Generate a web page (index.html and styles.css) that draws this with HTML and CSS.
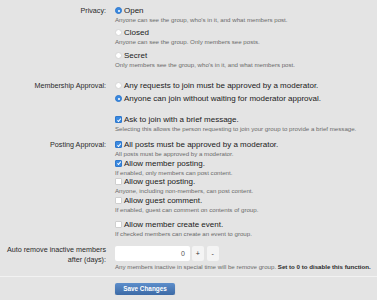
FILE: index.html
```html
<!DOCTYPE html>
<html>
<head>
<meta charset="utf-8">
<link rel="stylesheet" href="styles.css">
</head>
<body>
<div class="form">
  <div class="row">
    <div class="label">Privacy:</div>
    <div class="controls privacy">
      <div class="opt"><span class="radio on"></span>Open</div>
      <p class="desc">Anyone can see the group, who's in it, and what members post.</p>
      <div class="opt"><span class="radio"></span>Closed</div>
      <p class="desc">Anyone can see the group. Only members see posts.</p>
      <div class="opt"><span class="radio"></span>Secret</div>
      <p class="desc">Only members see the group, who's in it, and what members post.</p>
    </div>
  </div>

  <div class="row membership">
    <div class="label">Membership Approval:</div>
    <div class="controls">
      <div class="opt"><span class="radio"></span>Any requests to join must be approved by a moderator.</div>
      <div class="opt second"><span class="radio on"></span>Anyone can join without waiting for moderator approval.</div>
      <div class="opt spaced"><span class="check on"></span>Ask to join with a brief message.</div>
      <p class="desc">Selecting this allows the person requesting to join your group to provide a brief message.</p>
    </div>
  </div>

  <div class="row posting">
    <div class="label">Posting Approval:</div>
    <div class="controls">
      <div class="opt"><span class="check on"></span>All posts must be approved by a moderator.</div>
      <p class="desc">All posts must be approved by a moderator.</p>
      <div class="opt"><span class="check on"></span>Allow member posting.</div>
      <p class="desc">If enabled, only members can post content.</p>
      <div class="opt"><span class="check"></span>Allow guest posting.</div>
      <p class="desc">Anyone, including non-members, can post content.</p>
      <div class="opt"><span class="check"></span>Allow guest comment.</div>
      <p class="desc">If enabled, guest can comment on contents of group.</p>
      <div class="opt late"><span class="check"></span>Allow member create event.</div>
      <p class="desc">If checked members can create an event to group.</p>
    </div>
  </div>

  <div class="row auto">
    <div class="label two">Auto remove inactive members<br>after (days):</div>
    <div class="controls">
      <div class="spinner">
        <div class="num">0</div>
        <div class="btn">+</div>
        <div class="btn">-</div>
      </div>
      <p class="desc hint">Any members inactive in special time will be remove group. <b>Set to 0 to disable this function.</b></p>
    </div>
  </div>

  <div class="footer">
    <div class="save">Save Changes</div>
  </div>
</div>
</body>
</html>
```

FILE: styles.css
```css
body {
  margin: 0;
  background: #e4e4e4;
  font-family: "Liberation Sans", Arial, sans-serif;
  color: #1a1a1a;
}

.form {
  padding-top: 5.5px;
}

.row {
  display: grid;
  grid-template-columns: 106px 1fr;
  column-gap: 9px;
}

.label {
  text-align: right;
  font-size: 7.2px;
  line-height: 9px;
  color: #2a2a2a;
}

.label.two {
  line-height: 10px;
  margin-top: -0.5px;
}

.controls {
  display: flex;
  flex-direction: column;
}

.opt {
  display: flex;
  align-items: center;
  gap: 2px;
  height: 9px;
  font-size: 8px;
  white-space: nowrap;
}

.desc {
  margin: 0;
  font-size: 6.15px;
  line-height: 9.5px;
  color: #6a6a6a;
  white-space: nowrap;
}

.desc b {
  color: #2a2a2a;
}

.privacy .desc + .opt {
  margin-top: 4px;
}

.membership {
  margin-top: 11.5px;
}

.membership .second {
  margin-top: 4.5px;
}

.membership .spaced {
  margin-top: 12px;
}

.posting {
  margin-top: 6.5px;
}

.posting .late {
  margin-top: 5.5px;
}

.radio,
.check {
  flex: none;
  width: 7px;
  height: 7px;
  box-sizing: border-box;
  background: #fff;
  position: relative;
}

.radio {
  border-radius: 50%;
  border: 0.5px solid #d6d6d6;
}

.radio.on {
  background: #3a89e0;
  border-color: #2f78cc;
}

.radio.on::after {
  content: "";
  position: absolute;
  left: 2px;
  top: 2px;
  width: 2px;
  height: 2px;
  border-radius: 50%;
  background: #fff;
}

.check {
  border-radius: 1px;
  border: 0.5px solid #cfcfcf;
}

.check.on {
  background: #3a89e0;
  border-color: #2f78cc;
}

.check.on::after {
  content: "";
  position: absolute;
  left: 2.1px;
  top: 0.7px;
  width: 1.4px;
  height: 3.2px;
  border-right: 1px solid #fff;
  border-bottom: 1px solid #fff;
  transform: rotate(40deg);
}

.auto {
  margin-top: 7.5px;
}

.spinner {
  display: flex;
  height: 15px;
}

.num {
  width: 75px;
  background: #fff;
  border-radius: 2px;
  box-sizing: border-box;
  padding-right: 5px;
  text-align: right;
  font-size: 7px;
  line-height: 15px;
  color: #555;
}

.btn {
  width: 12.5px;
  margin-left: 1.5px;
  background: #f4f4f4;
  border-radius: 2px;
  text-align: center;
  font-size: 7px;
  line-height: 15px;
  color: #333;
}

.btn + .btn {
  margin-left: 2.5px;
}

.hint {
  margin-top: 1.75px;
}

.footer {
  margin-top: 3.75px;
  border-top: 1px solid #f2f2f2;
  padding: 6px 0 0 115px;
}

.save {
  width: 60px;
  height: 12px;
  border-radius: 2px;
  background: linear-gradient(#5d8ecb, #3c6aa6);
  box-shadow: 0 1px 1px rgba(0, 0, 0, 0.25);
  color: #fff;
  font-size: 6.4px;
  font-weight: bold;
  line-height: 12px;
  text-align: center;
}
```
